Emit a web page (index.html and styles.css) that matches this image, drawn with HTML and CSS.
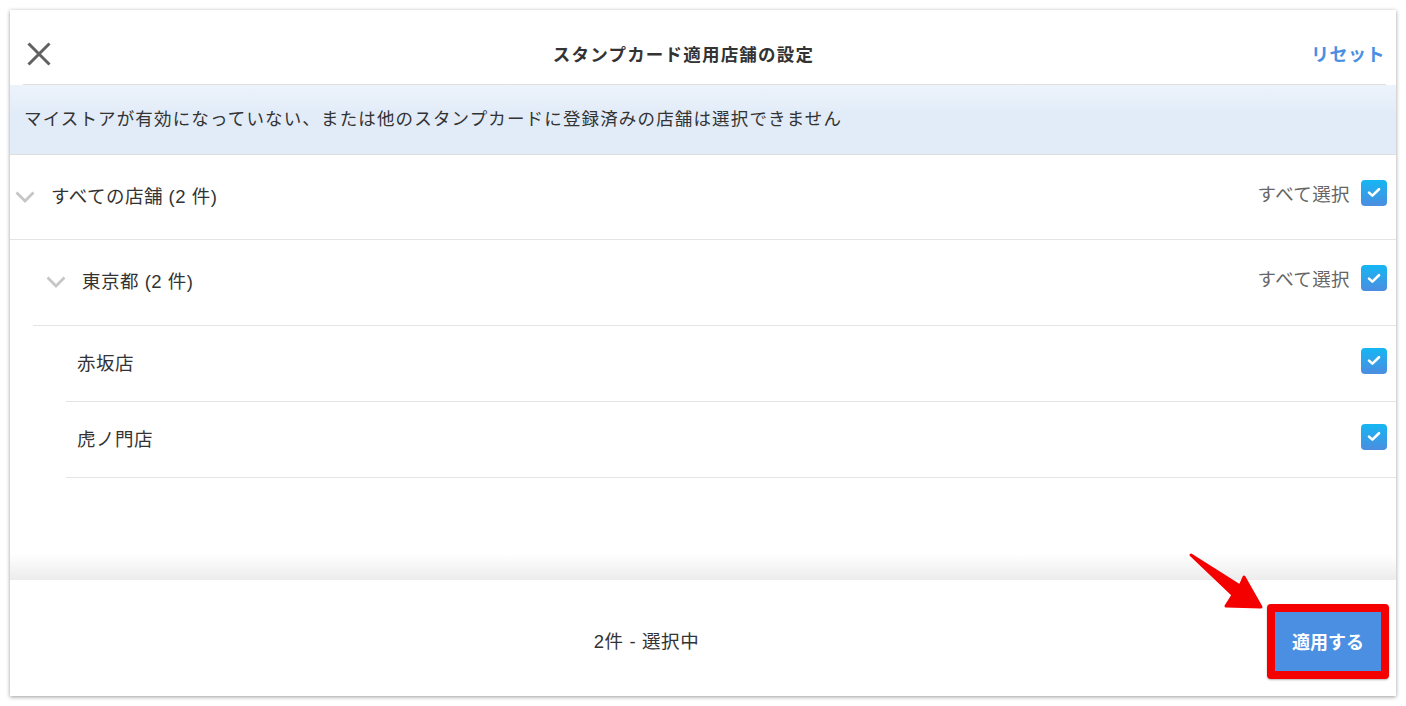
FILE: index.html
```html
<!DOCTYPE html>
<html lang="ja">
<head>
<meta charset="utf-8">
<title>スタンプカード適用店舗の設定</title>
<link rel="stylesheet" href="styles.css">
</head>
<body>
<div class="panel">
  <header class="header">
    <button class="close" aria-label="閉じる">
      <svg width="24" height="24" viewBox="0 0 24 24"><path d="M1.5 1.5 L22.5 22.5 M22.5 1.5 L1.5 22.5" stroke="#616161" stroke-width="3" fill="none"/></svg>
    </button>
    <h1 class="title">スタンプカード適用店舗の設定</h1>
    <a class="reset">リセット</a>
  </header>
  <div class="header-line"></div>
  <div class="notice">マイストアが有効になっていない、または他のスタンプカードに登録済みの店舗は選択できません</div>
  <div class="list">
    <div class="row group">
      <div class="row-left">
        <svg class="chev" width="20" height="12" viewBox="0 0 20 12"><path d="M1.5 1.5 L10 10 L18.5 1.5" stroke="#c6c6c6" stroke-width="2.8" fill="none"/></svg>
        <span class="label">すべての店舗 (2 件)</span>
      </div>
      <div class="row-right">
        <span class="all">すべて選択</span>
        <span class="check"><svg width="14" height="11" viewBox="0 0 14 11"><path d="M2 5.6 L5.4 8.6 L12 2.2" stroke="#fff" stroke-width="2.6" fill="none" stroke-linecap="round" stroke-linejoin="round"/></svg></span>
      </div>
    </div>
    <div class="sub">
      <div class="row group">
        <div class="row-left">
          <svg class="chev" width="20" height="12" viewBox="0 0 20 12"><path d="M1.5 1.5 L10 10 L18.5 1.5" stroke="#c6c6c6" stroke-width="2.8" fill="none"/></svg>
          <span class="label">東京都 (2 件)</span>
        </div>
        <div class="row-right">
          <span class="all">すべて選択</span>
          <span class="check"><svg width="14" height="11" viewBox="0 0 14 11"><path d="M2 5.6 L5.4 8.6 L12 2.2" stroke="#fff" stroke-width="2.6" fill="none" stroke-linecap="round" stroke-linejoin="round"/></svg></span>
        </div>
      </div>
      <div class="items">
        <div class="row item">
          <span class="label">赤坂店</span>
          <span class="check"><svg width="14" height="11" viewBox="0 0 14 11"><path d="M2 5.6 L5.4 8.6 L12 2.2" stroke="#fff" stroke-width="2.6" fill="none" stroke-linecap="round" stroke-linejoin="round"/></svg></span>
        </div>
        <div class="row item">
          <span class="label">虎ノ門店</span>
          <span class="check"><svg width="14" height="11" viewBox="0 0 14 11"><path d="M2 5.6 L5.4 8.6 L12 2.2" stroke="#fff" stroke-width="2.6" fill="none" stroke-linecap="round" stroke-linejoin="round"/></svg></span>
        </div>
      </div>
    </div>
  </div>
  <footer class="footer">
    <div class="count">2件 - 選択中</div>
    <div class="apply-frame"><button class="apply">適用する</button></div>
  </footer>
</div>
<svg class="arrow" width="1406" height="706" viewBox="0 0 1406 706">
  <path d="M1191 555 L1240 586 L1244 577 L1261 607 L1226 606 L1233 595 Z" fill="#f40000" stroke="#f40000" stroke-width="3" stroke-linejoin="round"/>
</svg>
</body>
</html>
```

FILE: styles.css
```css
* { box-sizing: border-box; }
html, body { margin: 0; padding: 0; }
body {
  background: #ffffff;
  font-family: "Liberation Sans", "Noto Sans CJK JP", sans-serif;
  color: #333;
  width: 1406px;
  height: 706px;
  position: relative;
  overflow: hidden;
}
.panel {
  position: relative;
  margin: 10px;
  width: 1386px;
  height: 686px;
  background: #fff;
  box-shadow: 0 1px 4px rgba(0,0,0,0.4);
  display: flex;
  flex-direction: column;
}
.header {
  height: 74px;
  padding-top: 12px;
  display: flex;
  align-items: center;
  flex-shrink: 0;
}
.close {
  width: 50px;
  padding: 0 0 0 17px;
  border: 0;
  background: none;
  display: flex;
  align-items: center;
  height: 24px;
  margin-top: 2px;
}
.title {
  flex: 1;
  margin: 0;
  text-align: center;
  font-size: 17.5px;
  letter-spacing: 1.2px;
  font-weight: bold;
  color: #333;
}
.reset {
  padding: 0 11px 0 4px;
  font-size: 18px;
  font-weight: bold;
  color: #4a90e2;
  letter-spacing: 0.5px;
}
.header-line {
  height: 1px;
  margin: 0 10px 0 13px;
  background: #e0e0e0;
  flex-shrink: 0;
}
.notice {
  height: 70px;
  flex-shrink: 0;
  display: flex;
  align-items: center;
  padding: 0 0 5px 14px;
  font-size: 17.5px;
  letter-spacing: 1.15px;
  color: #333;
  background: linear-gradient(#edf3fb, #e2ecf8 40%);
  border-bottom: 1px solid #dedede;
}
.list {
  flex: 1;
  display: flex;
  flex-direction: column;
}
.row {
  display: flex;
  align-items: center;
  justify-content: space-between;
  border-bottom: 1px solid #e4e4e4;
  padding-right: 9px;
}
.group { height: 85px; padding-bottom: 5px; }
.row-left { display: flex; align-items: center; }
.row-right { display: flex; align-items: center; gap: 11px; padding-bottom: 4px; }
.chev { margin: 4px 16px 0 5px; }
.label { font-size: 18.5px; letter-spacing: 0.5px; color: #333; }
.all { font-size: 18.5px; letter-spacing: 0.4px; color: #666; }
.sub { margin-left: 23px; }
.sub .group { height: 86px; }
.sub .chev { margin-left: 13px; }
.items { margin-left: 33px; }
.item { height: 76px; padding-left: 11px; padding-bottom: 3px; }
.item .check { margin-bottom: 3px; }
.check {
  width: 26px;
  height: 26px;
  border-radius: 4px;
  background: linear-gradient(#15b6f3, #4b8de0);
  display: flex;
  align-items: center;
  justify-content: center;
}
.footer {
  position: relative;
  height: 116px;
  flex-shrink: 0;
  display: flex;
  align-items: center;
  padding: 6px 7px 0 16px;
  background: #fff;
}
.footer::before {
  content: "";
  position: absolute;
  left: 0;
  right: 0;
  top: -26px;
  height: 26px;
  background: linear-gradient(rgba(235,235,235,0), #ececec);
}
.count {
  flex: 1;
  text-align: center;
  font-size: 18.5px;
  letter-spacing: 0.6px;
  color: #333;
  padding-bottom: 2px;
}
.apply-frame {
  background: #f40000;
  padding: 8px;
  border-radius: 4px;
  box-shadow: 0 1px 2px rgba(0,0,0,0.3);
}
.apply {
  width: 106px;
  height: 59px;
  border: 0;
  background: #4a8fe1;
  color: #fff;
  font-family: "Liberation Sans", "Noto Sans CJK JP", sans-serif;
  font-size: 18px;
  font-weight: bold;
  display: block;
}
.arrow {
  position: absolute;
  left: 0;
  top: 0;
  pointer-events: none;
}
```
